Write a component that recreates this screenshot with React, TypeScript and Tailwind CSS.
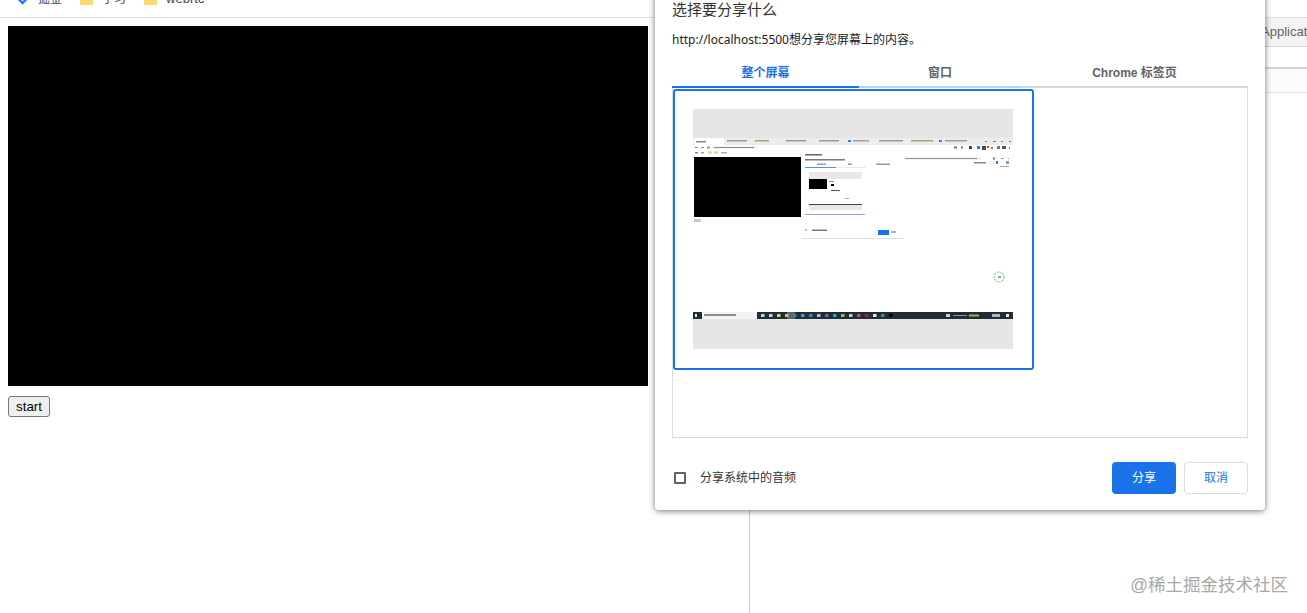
const font = "font-['Liberation_Sans','Noto_Sans_CJK_SC',sans-serif]";

function Folder() {
  return (
    <svg width="13" height="11" viewBox="0 0 13 11" className="shrink-0">
      <path d="M0 1.5 Q0 0 1.5 0 H5 L6.5 2 H11.5 Q13 2 13 3.5 V11 H0 Z" fill="#fbd96f" />
    </svg>
  );
}

// bits of the miniature page: [x, y, w, h, colour]
const marks: [number, number, number, number, string][] = [
  [0, 0, 320, 29, "#e6e6e6"],
  [0, 29, 320, 7, "#ececec"],
  [1, 29, 30, 7, "#ffffff"],
  [3, 32, 10, 1.5, "#8a8a8a"],
  [34, 31, 20, 1.5, "#9a9a9a"],
  [62, 31, 14, 1.5, "#a8a27a"],
  [93, 31, 20, 1.5, "#9a9a9a"],
  [126, 31, 20, 1.5, "#9a9a9a"],
  [155, 31, 3, 2, "#3f7fd0"],
  [160, 31, 16, 1.5, "#a0a0a0"],
  [186, 31, 24, 1.5, "#9a9a9a"],
  [218, 31, 22, 1.5, "#a8a27a"],
  [246, 31, 3, 2, "#3f7fd0"],
  [252, 31, 22, 1.5, "#a0a0a0"],
  [292, 32, 2, 1, "#777777"],
  [300, 32, 3, 1, "#777777"],
  [308, 32, 2, 1, "#777777"],
  [316, 32, 2, 1, "#777777"],
  [2, 38, 3, 1, "#888888"],
  [8, 38, 3, 1, "#888888"],
  [14, 37.5, 3, 2, "#999999"],
  [20, 37, 45, 3, "#f1f3f4"],
  [21, 38, 40, 1, "#8a8a8a"],
  [261, 37.5, 3, 2, "#777777"],
  [268, 37.5, 2, 2, "#777777"],
  [276, 37, 3, 3, "#6d2f4f"],
  [284, 37, 3, 3, "#2f7fd0"],
  [289, 37, 4, 4, "#4a4a4a"],
  [294, 37, 2, 2, "#d04040"],
  [298, 38, 2, 2, "#888888"],
  [304, 37, 3, 3, "#777777"],
  [309, 37, 4, 3, "#555555"],
  [316, 38, 1, 2, "#666666"],
  [2, 43, 3, 1.5, "#8a8a8a"],
  [8, 43, 3, 1.5, "#a0a0a0"],
  [15, 42.5, 4, 2, "#e5cf6c"],
  [21, 42.5, 4, 2, "#e5cf6c"],
  [28, 43, 6, 1.5, "#b0b0b0"],
  [1, 48, 107, 60, "#000000"],
  [1, 110, 7, 3, "#c8c8c8"],
  [112, 45, 17, 1.5, "#666666"],
  [112, 50, 40, 1.5, "#777777"],
  [112, 58, 31, 1, "#5b8fd6"],
  [143, 58, 30, 0.7, "#dddddd"],
  [124, 54.5, 9, 1.5, "#7fa6dc"],
  [155, 54.5, 4, 1.5, "#999999"],
  [183, 54.5, 14, 1.5, "#999999"],
  [116, 63, 53, 7, "#e8e8e8"],
  [116, 70, 18, 10, "#000000"],
  [136, 72, 5, 1, "#888888"],
  [138, 75, 3, 2, "#000000"],
  [138, 81, 9, 1, "#555555"],
  [152, 89, 4, 1, "#aaaaaa"],
  [116, 95, 53, 1, "#444444"],
  [116, 96, 53, 5, "#e8e8e8"],
  [112, 105, 60, 1, "#8fa6c8"],
  [211, 48, 77, 3, "#f1f1f1"],
  [212, 49, 72, 1, "#999999"],
  [300, 48.5, 2, 2, "#3f7fd0"],
  [308, 49, 3, 1, "#999999"],
  [315, 49, 1, 1, "#999999"],
  [281, 53, 12, 1.5, "#888888"],
  [295, 52, 9, 3, "#eef3fb"],
  [303, 52, 2, 3, "#3f7fd0"],
  [313, 52, 3, 3, "#999999"],
  [307, 57, 9, 1, "#aaaaaa"],
  [112, 120.5, 2, 1, "#777777"],
  [119, 120.5, 15, 1.5, "#777777"],
  [185, 121, 11, 5, "#1a73e8"],
  [198, 122, 5, 2, "#9ab8e0"],
  [109, 129, 102, 0.8, "#d8d8d8"],
  [0, 203, 320, 7, "#1f2d36"],
  [0, 210, 320, 30, "#e6e6e6"],
  [9, 203, 55, 7, "#f2f2f2"],
  [11, 205, 32, 2, "#8a8a8a"],
  [2, 205, 2, 3, "#e8e8e8"],
  [94, 203, 8, 7, "#5a6670"],
];

const tray = ["#cfd5d8", "#cfd5d8", "#e5cf6c", "#d8b860", "#2f8f8f", "#4f9f9f", "#3f7fd0", "#b0c0c8", "#8f4fc0", "#27a0c8", "#9fc050", "#c0c8cc", "#d05040", "#a02050", "#e8e8e8", "#3f8f8f", "#000000"];

function Thumbnail() {
  return (
    <svg width="320" height="240" viewBox="0 0 320 240" className="block blur-[0.3px]">
      {marks.map(([x, y, w, h, c], i) => (
        <rect key={i} x={x} y={y} width={w} height={h} fill={c} />
      ))}
      {tray.map((c, i) => (
        <rect key={c + i} x={68 + i * 8} y={205} width={3.5} height={3} fill={c} />
      ))}
      <rect x={253} y={205} width={4} height={3} fill="#cfd5d8" />
      <rect x={260} y={206} width={14} height={1} fill="#8a9aa2" />
      <rect x={276} y={205.5} width={10} height={2} fill="#a8b050" />
      <rect x={299} y={205} width={8} height={3} fill="#aeb8bd" />
      <rect x={313} y={205} width={3} height={3} fill="#e8e8e8" />
      <circle cx={306} cy={168} r={5} fill="none" stroke="#4fc873" strokeWidth={1} strokeDasharray="2.5 1" />
      <rect x={305} y={167} width={3} height={2} fill="#9aa0a0" />
    </svg>
  );
}

export default function App() {
  return (
    <div className={`relative h-[613px] w-[1307px] overflow-hidden bg-white ${font}`}>
      <div className="flex h-[18px] items-center overflow-hidden border-b border-[#dedede] pl-[15px] text-[12px] text-[#444]">
        <div className="-mt-[19px] flex items-center">
          <svg width="15" height="14" viewBox="0 0 15 14" className="mr-[8px] shrink-0">
            <path d="M1.5 5 L7.5 11 L13.5 5 L7.5 -1 Z" fill="none" stroke="#1e80ff" strokeWidth="2.4" />
          </svg>
          <span className="mr-[18px]">掘金</span>
          <Folder />
          <span className="ml-[9px] mr-[18px]">学习</span>
          <Folder />
          <span className="ml-[9px] text-[13px]">webrtc</span>
        </div>
      </div>

      <div className="flex h-[595px]">
        <div className="w-[750px] shrink-0 border-r border-[#c9c9c9] pl-2 pt-2">
          <div className="h-[360px] w-[640px] bg-black" />
          <button className="mt-[10px] block h-[21px] w-[42px] rounded-[3px] border border-[#767676] bg-[#efefef] text-[13.33px] text-black">
            start
          </button>
        </div>
        <div className="min-w-0 flex-1">
          <div className="flex h-[29px] items-center overflow-hidden border-b border-[#d4d4d4] bg-[#f3f3f3] pl-[511px] text-[13px] whitespace-nowrap text-[#5f6368]">
            Application
          </div>
          <div className="h-[22px] border-b-2 border-[#d4d4d4]" />
          <div className="h-[24px] border-b border-[#e4e4e4] bg-[#fcfcfc]" />
        </div>
      </div>

      <div className="absolute top-[-20px] left-[655px] flex h-[530px] w-[610px] flex-col rounded-[4px] bg-white px-[17px] shadow-[0_1px_6px_rgba(0,0,0,0.55)]">
        <div className="mt-[22px] text-[15px] leading-[16px] text-[#333]">选择要分享什么</div>
        <div className="mt-[14px] font-['Noto_Sans','Noto_Sans_CJK_SC',sans-serif] text-[12px] leading-[16px] text-[#222]">http://localhost:5500想分享您屏幕上的内容。</div>
        <div className="mt-[17px] flex h-[23px] text-[12px] font-bold text-[#5f6368]">
          <div className="flex w-[187px] items-start justify-center border-b-2 border-[#1a73e8] leading-[16px] text-[#1a73e8]">整个屏幕</div>
          <div className="flex w-[162px] items-start justify-center border-b-2 border-[#b9d3f5] leading-[16px]">窗口</div>
          <div className="flex w-[227px] items-start justify-center border-b-2 border-[#d8d8d8] leading-[16px]">Chrome 标签页</div>
        </div>
        <div className="h-[350px] w-[576px] border border-t-0 border-[#dadce0] pt-px">
          <div className="h-[281px] w-[361px] rounded-[3px] border-2 border-[#1a73e8] p-[18px]">
            <Thumbnail />
          </div>
        </div>
        <div className="mt-[24px] flex items-center">
          <div className="ml-[2px] h-[12px] w-[12px] rounded-[1px] border-2 border-[#5f6368]" />
          <span className="ml-[14px] text-[12px] text-[#333]">分享系统中的音频</span>
          <button className="ml-auto h-[32px] w-[64px] rounded-[4px] bg-[#1a73e8] text-[12px] text-white">分享</button>
          <button className="ml-[8px] h-[32px] w-[64px] rounded-[4px] border border-[#dadce0] bg-white text-[12px] text-[#1a73e8]">取消</button>
        </div>
      </div>

      <div className="absolute top-[573px] right-[19px] text-[17.5px] leading-[24px] text-[#a8a8a8]">@稀土掘金技术社区</div>
    </div>
  );
}
